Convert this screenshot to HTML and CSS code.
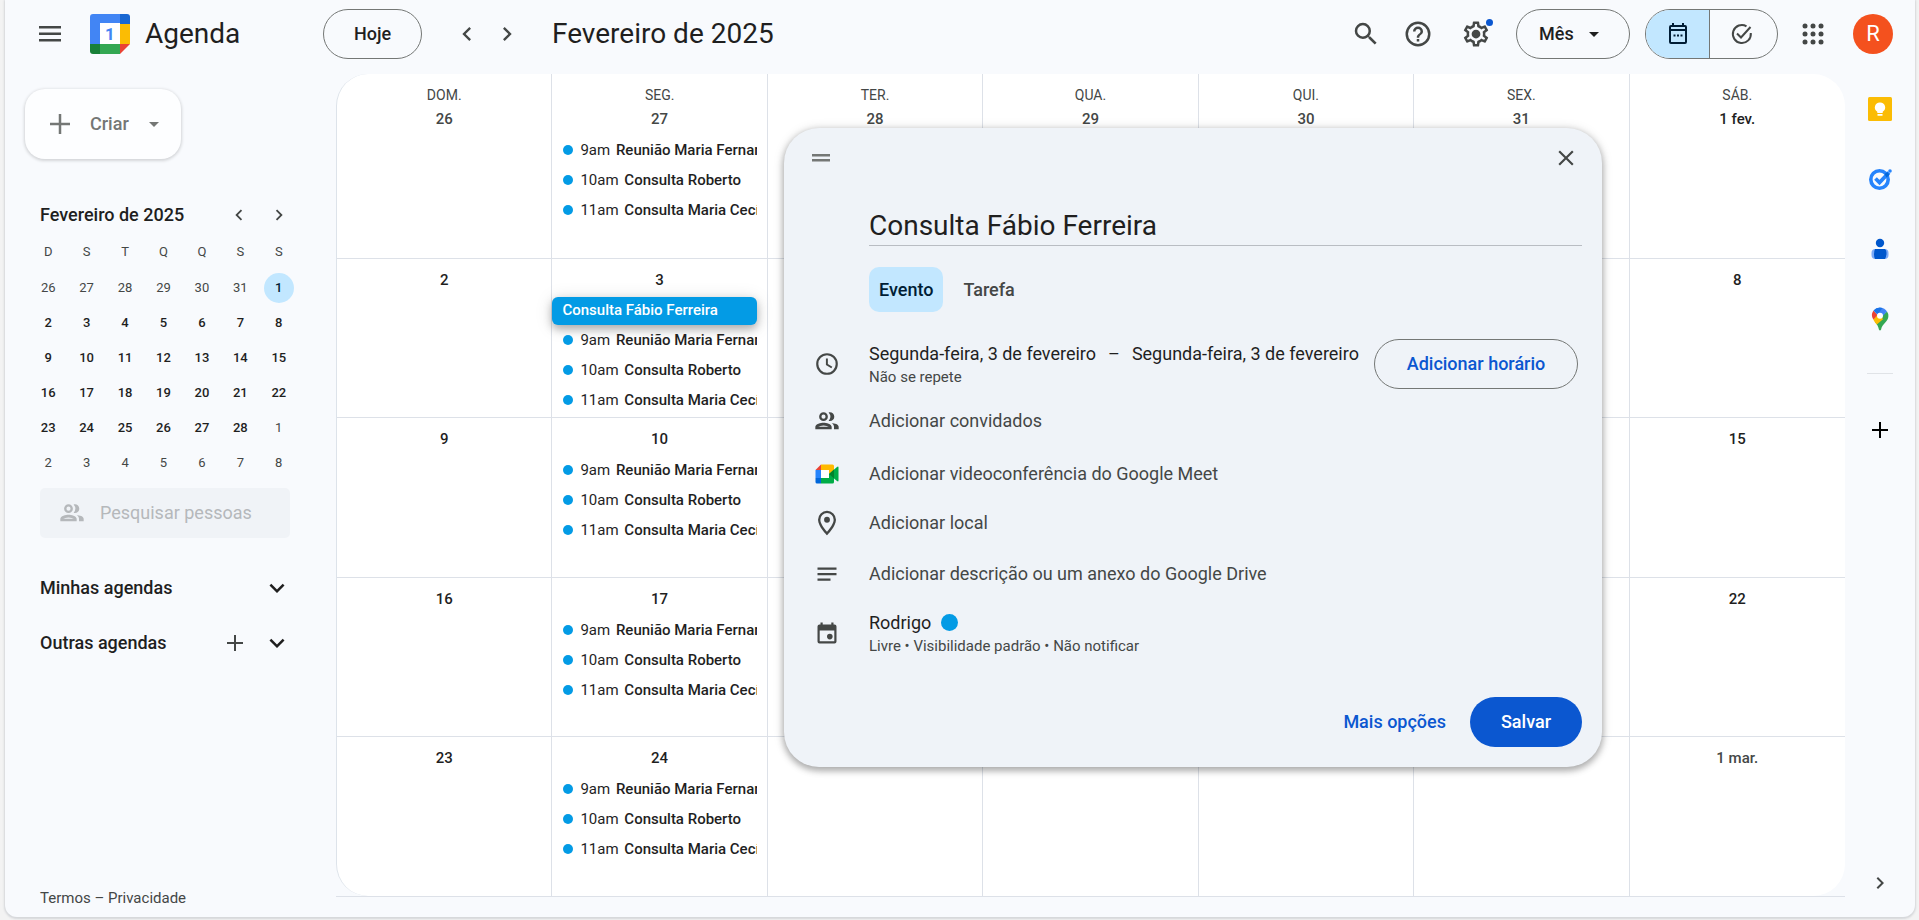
FILE: index.html
```html
<!DOCTYPE html>
<html lang="pt-BR">
<head>
<meta charset="utf-8">
<meta name="viewport" content="width=device-width, initial-scale=1">
<title>Agenda - Fevereiro de 2025</title>
<link rel="stylesheet" href="styles.css">
</head>
<body>
<svg class="defs" aria-hidden="true">
  <symbol id="i-left" viewBox="0 0 24 24"><path d="M15.41 7.41 14 6l-6 6 6 6 1.41-1.41L10.83 12z"/></symbol>
  <symbol id="i-right" viewBox="0 0 24 24"><path d="M10 6 8.59 7.41 13.17 12l-4.58 4.59L10 18l6-6z"/></symbol>
  <symbol id="i-down" viewBox="0 0 24 24"><path d="M7.41 8.59 12 13.17l4.59-4.58L18 10l-6 6-6-6z"/></symbol>
  <symbol id="i-caret" viewBox="0 0 24 24"><path d="m7 10 5 5 5-5z"/></symbol>
  <symbol id="i-plus" viewBox="0 0 24 24"><path d="M20 13h-7v7h-2v-7H4v-2h7V4h2v7h7z"/></symbol>
  <symbol id="i-people" viewBox="0 0 24 24"><path d="M9 13.5c-2.34 0-7 1.17-7 3.5v2h14v-2c0-2.33-4.66-3.500-7-3.500zM4.340 17c.84-.58 2.870-1.250 4.660-1.250s3.820.67 4.660 1.250zM9 12a3.750 3.750 0 1 0 0-7.500A3.750 3.750 0 0 0 9 12zm0-5.500a1.750 1.750 0 1 1 0 3.500 1.750 1.750 0 0 1 0-3.500zm7.040 7.310c1.160.84 1.960 1.960 1.960 3.190V19h4v-2c0-2.020-3.500-2.920-5.960-3.190zM14.500 12a3.750 3.750 0 0 0 0-7.500c-.44 0-.8.080-1.100.2a5.500 5.500 0 0 1 0 7.100c.3.120.66.200 1.100.200z"/></symbol>
</svg>

<div class="app">
  <header class="topbar">
    <div class="brand">
      <button class="icon-btn" aria-label="Menu principal">
        <svg class="ic-28" viewBox="0 0 28 28"><path d="M3 6h22v2.500H3zM3 12.500h22V15H3zM3 19h22v2.500H3z"/></svg>
      </button>
      <svg class="logo" viewBox="0 0 40 40" aria-hidden="true">
        <path fill="#4285f4" d="M3 0h27v9H10v21H0V3a3 3 0 0 1 3-3z"/>
        <path fill="#fff" d="M10 9h20v21H10z"/>
        <path fill="#1967d2" d="M30 0h7a3 3 0 0 1 3 3v7H30z"/>
        <path fill="#fbbc04" d="M30 10h10v20H30z"/>
        <path fill="#188038" d="M0 30h10v10H3a3 3 0 0 1-3-3z"/>
        <path fill="#34a853" d="M10 30h20v10H10z"/>
        <path fill="#ea4335" d="M30 30h10L30 40z"/>
        <text class="logo-day" x="20" y="26" text-anchor="middle">1</text>
      </svg>
      <span class="brand-name">Agenda</span>
    </div>
    <div class="period">
      <button class="pill today">Hoje</button>
      <div class="pager">
        <button class="icon-btn" aria-label="Mês anterior"><svg class="ic-28"><use href="#i-left"/></svg></button>
        <button class="icon-btn" aria-label="Próximo mês"><svg class="ic-28"><use href="#i-right"/></svg></button>
      </div>
      <h1 class="period-title">Fevereiro de 2025</h1>
    </div>
    <div class="tools">
      <button class="icon-btn tool" aria-label="Pesquisar"><svg class="ic-30" viewBox="0 0 24 24"><path d="M15.500 14h-.79l-.28-.27A6.470 6.470 0 0 0 16 9.500 6.500 6.500 0 1 0 9.500 16c1.610 0 3.090-.59 4.230-1.570l.27.28v.79l5 4.990L20.490 19zm-6 0a4.500 4.500 0 1 1 0-9 4.500 4.500 0 0 1 0 9z"/></svg></button>
      <button class="icon-btn tool" aria-label="Ajuda"><svg class="ic-30" viewBox="0 0 24 24"><path d="M11 18h2v-2h-2zm1-16a10 10 0 1 0 0 20 10 10 0 0 0 0-20zm0 18a8 8 0 1 1 0-16 8 8 0 0 1 0 16zm0-14a4 4 0 0 0-4 4h2a2 2 0 1 1 4 0c0 2-3 1.750-3 5h2c0-2.250 3-2.500 3-5a4 4 0 0 0-4-4z"/></svg></button>
      <button class="icon-btn tool settings" aria-label="Configurações"><svg class="ic-30" viewBox="0 0 24 24"><path d="M19.43 12.98c.04-.32.07-.64.07-.98 0-.34-.03-.66-.07-.98l2.110-1.650c.19-.15.24-.42.12-.64l-2-3.460c-.09-.16-.26-.25-.44-.25-.06 0-.12.01-.17.03l-2.490 1c-.52-.4-1.080-.73-1.690-.98l-.38-2.650C14.460 2.180 14.250 2 14 2h-4c-.25 0-.46.18-.49.42l-.38 2.650c-.61.25-1.170.59-1.690.98l-2.490-1c-.06-.02-.12-.03-.18-.03-.17 0-.34.09-.43.25l-2 3.460c-.13.22-.07.49.12.64l2.110 1.650c-.04.32-.07.65-.07.98 0 .33.03.66.07.98l-2.110 1.650c-.19.15-.24.42-.12.64l2 3.460c.09.16.26.25.44.25.06 0 .12-.01.17-.03l2.490-1c.52.4 1.080.73 1.690.98l.38 2.650c.03.24.24.42.49.42h4c.25 0 .46-.18.49-.42l.38-2.650c.61-.25 1.170-.59 1.690-.98l2.490 1c.06.02.12.03.18.03.17 0 .34-.09.43-.25l2-3.460c.12-.22.07-.49-.12-.64zm-1.980-1.710c.04.31.05.52.05.73 0 .21-.02.43-.05.73l-.14 1.130.89.7 1.080.84-.7 1.210-1.270-.51-1.040-.42-.9.68c-.43.32-.84.56-1.250.73l-1.060.43-.16 1.130-.2 1.350h-1.400l-.19-1.350-.16-1.130-1.060-.43c-.43-.18-.83-.41-1.230-.71l-.91-.7-1.060.43-1.270.51-.7-1.210 1.080-.84.89-.7-.14-1.130c-.03-.31-.05-.54-.05-.74s.02-.43.05-.73l.14-1.130-.89-.7-1.080-.84.7-1.210 1.270.51 1.040.42.9-.68c.43-.32.84-.56 1.250-.73l1.060-.43.16-1.130.2-1.350h1.390l.19 1.350.16 1.130 1.060.43c.43.18.83.41 1.230.71l.91.7 1.060-.43 1.270-.51.7 1.210-1.070.85-.89.7z"/><circle cx="12" cy="12" r="3.500"/></svg><span class="notice"></span></button>
      <button class="pill view">Mês <svg class="ic-24"><use href="#i-caret"/></svg></button>
      <div class="switch">
        <button class="switch-btn on" aria-label="Agenda" aria-pressed="true"><svg class="ic-24" viewBox="0 0 24 24"><path fill-rule="evenodd" d="M19 3h-1V1h-2v2H8V1H6v2H5a2 2 0 0 0-2 2v15a2 2 0 0 0 2 2h14a2 2 0 0 0 2-2V5a2 2 0 0 0-2-2zm0 17H5V9h14zM5 7V5h14v2zm2.500 5.500h2v2h-2zm3.500 0h2v2h-2zm3.500 0h2v2h-2z"/></svg></button>
        <button class="switch-btn" aria-label="Tarefas" aria-pressed="false"><svg class="ic-24" viewBox="0 0 24 24"><path class="line" d="M16.500 4.300A9 9 0 1 0 20.800 11M7 11.500l4 4L20.500 5"/></svg></button>
      </div>
      <button class="icon-btn apps" aria-label="Google Apps"><svg class="ic-28" viewBox="0 0 28 28"><circle cx="6" cy="6" r="2.500"/><circle cx="14" cy="6" r="2.500"/><circle cx="22" cy="6" r="2.500"/><circle cx="6" cy="14" r="2.500"/><circle cx="14" cy="14" r="2.500"/><circle cx="22" cy="14" r="2.500"/><circle cx="6" cy="22" r="2.500"/><circle cx="14" cy="22" r="2.500"/><circle cx="22" cy="22" r="2.500"/></svg></button>
      <button class="avatar" aria-label="Conta">R</button>
    </div>
  </header>

  <div class="body">
    <aside class="sidebar">
      <button class="create"><svg class="ic-30"><use href="#i-plus"/></svg><span>Criar</span><svg class="ic-24"><use href="#i-caret"/></svg></button>

      <div class="mini-head">
        <h2 class="side-title">Fevereiro de 2025</h2>
        <div class="mini-pager">
          <button class="icon-btn" aria-label="Mês anterior"><svg class="ic-22"><use href="#i-left"/></svg></button>
          <button class="icon-btn" aria-label="Próximo mês"><svg class="ic-22"><use href="#i-right"/></svg></button>
        </div>
      </div>
      <table class="mini">
        <thead><tr><th>D</th><th>S</th><th>T</th><th>Q</th><th>Q</th><th>S</th><th>S</th></tr></thead>
        <tbody>
          <tr><td class="out">26</td><td class="out">27</td><td class="out">28</td><td class="out">29</td><td class="out">30</td><td class="out">31</td><td><span class="selected">1</span></td></tr>
          <tr><td>2</td><td>3</td><td>4</td><td>5</td><td>6</td><td>7</td><td>8</td></tr>
          <tr><td>9</td><td>10</td><td>11</td><td>12</td><td>13</td><td>14</td><td>15</td></tr>
          <tr><td>16</td><td>17</td><td>18</td><td>19</td><td>20</td><td>21</td><td>22</td></tr>
          <tr><td>23</td><td>24</td><td>25</td><td>26</td><td>27</td><td>28</td><td class="out">1</td></tr>
          <tr><td class="out">2</td><td class="out">3</td><td class="out">4</td><td class="out">5</td><td class="out">6</td><td class="out">7</td><td class="out">8</td></tr>
        </tbody>
      </table>

      <label class="people"><svg class="ic-28" aria-hidden="true"><use href="#i-people"/></svg><input type="text" placeholder="Pesquisar pessoas" aria-label="Pesquisar pessoas"></label>

      <div class="group">
        <h2 class="side-title">Minhas agendas</h2>
        <button class="icon-btn" aria-label="Expandir minhas agendas"><svg class="ic-30 dark"><use href="#i-down"/></svg></button>
      </div>
      <div class="group">
        <h2 class="side-title">Outras agendas</h2>
        <button class="icon-btn add" aria-label="Adicionar outras agendas"><svg class="ic-24"><use href="#i-plus"/></svg></button>
        <button class="icon-btn" aria-label="Expandir outras agendas"><svg class="ic-30 dark"><use href="#i-down"/></svg></button>
      </div>

      <footer class="legal"><a href="#termos">Termos</a> – <a href="#privacidade">Privacidade</a></footer>
    </aside>

    <main class="stage">
      <div class="month-frame">
      <div class="month">
        <div class="cell"><span class="dow">DOM.</span><span class="date out">26</span></div>
        <div class="cell"><span class="dow">SEG.</span><span class="date out">27</span>
          <ul class="events"><li class="event"><span class="time">9am</span> Reunião Maria Fernanda</li><li class="event"><span class="time">10am</span> Consulta Roberto</li><li class="event"><span class="time">11am</span> Consulta Maria Cecília</li></ul></div>
        <div class="cell"><span class="dow">TER.</span><span class="date out">28</span></div>
        <div class="cell"><span class="dow">QUA.</span><span class="date out">29</span></div>
        <div class="cell"><span class="dow">QUI.</span><span class="date out">30</span></div>
        <div class="cell"><span class="dow">SEX.</span><span class="date out">31</span></div>
        <div class="cell"><span class="dow">SÁB.</span><span class="date">1 fev.</span></div>

        <div class="cell"><span class="date">2</span></div>
        <div class="cell"><span class="date">3</span>
          <button class="draft">Consulta Fábio Ferreira</button>
          <ul class="events"><li class="event"><span class="time">9am</span> Reunião Maria Fernanda</li><li class="event"><span class="time">10am</span> Consulta Roberto</li><li class="event"><span class="time">11am</span> Consulta Maria Cecília</li></ul></div>
        <div class="cell"></div><div class="cell"></div><div class="cell"></div><div class="cell"></div>
        <div class="cell"><span class="date">8</span></div>

        <div class="cell"><span class="date">9</span></div>
        <div class="cell"><span class="date">10</span>
          <ul class="events"><li class="event"><span class="time">9am</span> Reunião Maria Fernanda</li><li class="event"><span class="time">10am</span> Consulta Roberto</li><li class="event"><span class="time">11am</span> Consulta Maria Cecília</li></ul></div>
        <div class="cell"></div><div class="cell"></div><div class="cell"></div><div class="cell"></div>
        <div class="cell"><span class="date">15</span></div>

        <div class="cell"><span class="date">16</span></div>
        <div class="cell"><span class="date">17</span>
          <ul class="events"><li class="event"><span class="time">9am</span> Reunião Maria Fernanda</li><li class="event"><span class="time">10am</span> Consulta Roberto</li><li class="event"><span class="time">11am</span> Consulta Maria Cecília</li></ul></div>
        <div class="cell"></div><div class="cell"></div><div class="cell"></div><div class="cell"></div>
        <div class="cell"><span class="date">22</span></div>

        <div class="cell"><span class="date">23</span></div>
        <div class="cell"><span class="date">24</span>
          <ul class="events"><li class="event"><span class="time">9am</span> Reunião Maria Fernanda</li><li class="event"><span class="time">10am</span> Consulta Roberto</li><li class="event"><span class="time">11am</span> Consulta Maria Cecília</li></ul></div>
        <div class="cell"></div><div class="cell"></div><div class="cell"></div><div class="cell"></div>
        <div class="cell"><span class="date out">1 mar.</span></div>
      </div>
      </div>

      <section class="dialog" role="dialog" aria-label="Novo evento">
        <div class="dialog-bar">
          <svg class="handle" viewBox="0 0 18 8" aria-hidden="true"><path d="M0 0h18v2.500H0zM0 5h18v2.500H0z"/></svg>
          <button class="icon-btn" aria-label="Fechar"><svg class="ic-26" viewBox="0 0 24 24"><path d="M19 6.410 17.590 5 12 10.590 6.410 5 5 6.410 10.590 12 5 17.590 6.410 19 12 13.410 17.590 19 19 17.590 13.410 12z"/></svg></button>
        </div>
        <div class="dialog-title">
          <input class="name" type="text" value="Consulta Fábio Ferreira" aria-label="Título">
        </div>
        <div class="tabs">
          <button class="tab on">Evento</button>
          <button class="tab">Tarefa</button>
        </div>
        <div class="row when">
          <svg class="ic-26" viewBox="0 0 24 24" aria-hidden="true"><path d="M12 2a10 10 0 1 0 0 20 10 10 0 0 0 0-20zm0 18a8 8 0 1 1 0-16 8 8 0 0 1 0 16zm.800-13H11v6l5 3 .9-1.400-4.100-2.500z"/></svg>
          <div class="lines">
            <div class="strong range"><span>Segunda-feira, 3 de fevereiro</span><span>–</span><span>Segunda-feira, 3 de fevereiro</span></div>
            <div class="small">Não se repete</div>
          </div>
          <button class="pill add-time">Adicionar horário</button>
        </div>
        <div class="row guests"><svg class="ic-28" aria-hidden="true"><use href="#i-people"/></svg><span>Adicionar convidados</span></div>
        <div class="row meet"><svg class="ic-24" viewBox="0 0 24 24" aria-hidden="true"><path fill="#ea4335" d="M6 2.500v5.500H.500z"/><path fill="#ffba00" d="M6 2.500h11.500q1.500 0 1.500 1.500v4.500L14 12V8H6z"/><path fill="#2684fc" d="M.500 8H6v8H.500z"/><path fill="#0066da" d="M.500 16H6v5.500H2q-1.500 0-1.500-1.500z"/><path fill="#00ac47" d="M6 16h8v-4l8-7q1.500-1 1.500.500v13q0 1.500-1.500.500l-3-2.500V20q0 1.500-1.500 1.500H6z"/><path fill="#00832d" d="m14 12 5-4.500v9z"/><path fill="#fff" d="M6 8h8v8H6z"/></svg><span>Adicionar videoconferência do Google Meet</span></div>
        <div class="row place"><svg class="ic-28" viewBox="0 0 24 24" aria-hidden="true"><path d="M12 1.500a7.700 7.700 0 0 0-7.700 7.700C4.300 15 12 22.500 12 22.500s7.700-7.500 7.700-13.300A7.700 7.700 0 0 0 12 1.500zm0 18c-2.500-2.900-5.700-7.100-5.700-10.300a5.700 5.700 0 0 1 11.400 0c0 3.200-3.200 7.400-5.700 10.300z"/><circle cx="12" cy="9.200" r="2.500"/></svg><span>Adicionar local</span></div>
        <div class="row notes"><svg class="ic-24" viewBox="0 0 24 24" aria-hidden="true"><path d="M2.500 5.500h19v2.200h-19zM2.500 11h19v2.200h-19zM2.500 16.500h13v2.200h-13z"/></svg><span>Adicionar descrição ou um anexo do Google Drive</span></div>
        <div class="row owner">
          <svg class="ic-24" viewBox="0 0 24 24" aria-hidden="true"><path fill-rule="evenodd" d="M5.500 1.500h2.200v2h8.600v-2h2.200v2h1a2 2 0 0 1 2 2v15a2 2 0 0 1-2 2h-15a2 2 0 0 1-2-2v-15a2 2 0 0 1 2-2h1zM4.700 9.500v10.800h14.600V9.500z"/><circle cx="14.800" cy="15.600" r="2.800"/></svg>
          <div class="lines">
            <div class="strong who">Rodrigo <span class="swatch"></span></div>
            <div class="small">Livre • Visibilidade padrão • Não notificar</div>
          </div>
        </div>
        <div class="actions">
          <button class="link-btn">Mais opções</button>
          <button class="save">Salvar</button>
        </div>
      </section>
    </main>

    <nav class="rail" aria-label="Painel lateral">
      <button class="icon-btn" aria-label="Keep"><svg class="ic-24" viewBox="0 0 24 24"><rect width="24" height="24" rx="1.500" fill="#fbbc04"/><path fill="#fff" d="M12 5.500a5 5 0 0 0-2.700 9.300V16h5.400v-1.200A5 5 0 0 0 12 5.500zM9.500 17h5v1.700h-5z"/></svg></button>
      <button class="icon-btn" aria-label="Tarefas"><svg class="ic-24" viewBox="0 0 24 24"><circle cx="11.500" cy="12.500" r="8.700" fill="none" stroke="#2684fc" stroke-width="3.600"/><path d="m7.500 11.500 4 4 9.500-10" fill="none" stroke="#2684fc" stroke-width="3.800"/><path fill="#0066da" d="m16.500 7 3-2 2 3-3 2.500z"/><circle cx="22" cy="4" r="1.800" fill="#2684fc"/></svg></button>
      <button class="icon-btn" aria-label="Contatos"><svg class="ic-24" viewBox="0 0 24 24"><rect x="3.500" y="12" width="17" height="10" rx="4" fill="#7baaf7"/><path fill="#0057cc" d="M7 12h10q1.500 1 1.500 4t-1.500 6H7q-1-2-1-5t1-5z"/><circle cx="12" cy="6" r="4.200" fill="#0057cc"/></svg></button>
      <button class="icon-btn" aria-label="Maps"><svg class="ic-24" viewBox="0 0 24 24"><path fill="#34a853" d="M20.400 9c0 6-6.400 7.500-7.300 13.500q-1.100 2-2.200 0C10.400 19.500 9 17.500 7 15l12-10.500q1.400 2 1.400 4.500z"/><path fill="#fbbc04" d="m5.300 12.500 4-5 6 4.500-6.500 5.500q-2.500-2.500-3.500-5z"/><path fill="#ea4335" d="M5.600 3.500 9.500 8l-4 4.500C3 9 3.700 6 5.600 3.500z"/><path fill="#4285f4" d="M5.600 3.500A8.400 8.400 0 0 1 19 4.500L14 10 9.500 7.500z"/><path fill="#1a73e8" d="M5.600 3.500A8.400 8.400 0 0 1 14.500.900L9.500 7.500z"/><circle cx="12" cy="8.700" r="3" fill="#fff"/></svg></button>
      <hr class="rail-line">
      <button class="icon-btn" aria-label="Instalar complementos"><svg class="ic-24 black"><use href="#i-plus"/></svg></button>
      <button class="icon-btn collapse" aria-label="Ocultar painel lateral"><svg class="ic-24"><use href="#i-right"/></svg></button>
    </nav>
  </div>
</div>
</body>
</html>
```
FILE: styles.css
```css
* { box-sizing: border-box; }

body {
  margin: 0;
  min-height: 100vh;
  display: flex;
  background: #f3f3f3;
  color: #1f1f1f;
  font: 400 18px/24px Roboto, "Liberation Sans", sans-serif;
}

h1, h2, ul { margin: 0; padding: 0; font-weight: inherit; }
ul { list-style: none; }
button, input { font: inherit; color: inherit; }
button { border: 0; padding: 0; background: none; cursor: pointer; }
svg { display: block; flex: none; fill: #444746; }
a { color: inherit; text-decoration: none; }

.defs { position: absolute; width: 0; height: 0; }
.ic-22 { width: 22px; height: 22px; }
.ic-24 { width: 24px; height: 24px; }
.ic-26 { width: 26px; height: 26px; }
.ic-28 { width: 28px; height: 28px; }
.ic-30 { width: 30px; height: 30px; }
.dark { fill: #1f1f1f; }
.black { fill: #000; }
.line { fill: none; stroke: #444746; stroke-width: 2; }

.icon-btn {
  display: flex;
  align-items: center;
  justify-content: center;
  width: 40px;
  height: 40px;
  border-radius: 50%;
}

.pill {
  height: 50px;
  border: 1px solid #747775;
  border-radius: 25px;
  font-weight: 500;
}

.app {
  flex: 1;
  display: flex;
  flex-direction: column;
  min-width: 0;
  margin: 0 4px 3px 5px;
  background: #f8fafd;
  border-radius: 0 0 12px 12px;
  box-shadow: 0 1px 2px 1px #d5d7da;
}

/* Top bar */
.topbar { display: flex; align-items: center; height: 74px; padding: 0 22px 6px 0; }
.brand { display: flex; align-items: center; width: 318px; padding-left: 25px; }
.logo { width: 40px; height: 40px; margin: 0 15px 0 20px; }
.logo-day { font: 700 17px Roboto, sans-serif; fill: #4285f4; }
.brand-name { font-size: 28px; line-height: 36px; }
.period { display: flex; align-items: center; }
.today { width: 99px; }
.pager { display: flex; margin: 0 25px 0 25px; }
.period-title { font-size: 28px; line-height: 36px; }
.tools { display: flex; align-items: center; margin-left: auto; }
.tool { margin-right: 12px; }
.settings { position: relative; margin: 0 20px 0 6px; }
.notice {
  position: absolute;
  top: 5px;
  right: 3px;
  width: 7px;
  height: 7px;
  border-radius: 50%;
  background: #0b57d0;
}
.view { display: flex; align-items: center; gap: 8px; width: 114px; padding-left: 22px; }
.view svg { fill: #1f1f1f; }
.switch {
  display: flex;
  width: 133px;
  height: 50px;
  margin-left: 15px;
  border: 1px solid #747775;
  border-radius: 25px;
  overflow: hidden;
}
.switch-btn { flex: 1; display: flex; align-items: center; justify-content: center; }
.switch-btn:last-child { padding-right: 4px; }
.switch-btn.on { background: #c2e7ff; border-right: 1px solid #747775; }
.switch-btn.on svg { fill: #001d35; }
.apps { margin: 0 20px 0 15px; }
.avatar {
  width: 40px;
  height: 40px;
  border-radius: 50%;
  background: #f4511e;
  color: #fff;
  font-size: 22px;
}

/* Body */
.body { flex: 1; display: flex; min-height: 0; }

/* Sidebar */
.sidebar {
  display: flex;
  flex-direction: column;
  flex: none;
  width: 331px;
  padding: 15px 46px 7px 35px;
}
.create {
  display: flex;
  align-items: center;
  align-self: flex-start;
  height: 70px;
  margin-left: -15px;
  padding: 0 15px 0 20px;
  border-radius: 20px;
  background: #fdfeff;
  box-shadow: 0 1px 3px 1px #d4d6d9;
  color: #747775;
  font-weight: 500;
}
.create span { margin: 0 13px 0 15px; }
.create svg { fill: #747775; }
.mini-head { display: flex; justify-content: space-between; align-items: center; margin-top: 36px; }
.side-title { font-size: 18px; line-height: 24px; font-weight: 500; }
.mini-pager { display: flex; margin-right: -9px; }
.mini {
  width: 269px;
  margin: -1px 0 0 -11px;
  border-collapse: collapse;
  table-layout: fixed;
  font-size: 13px;
  line-height: 16px;
  text-align: center;
}
.mini th { height: 36px; padding: 0; font-weight: 400; color: #444746; }
.mini td { height: 35px; padding: 0; font-weight: 500; }
.mini .out { font-weight: 400; color: #444746; }
.selected {
  display: block;
  width: 30px;
  margin: 0 auto;
  border-radius: 50%;
  background: #c2e7ff;
  color: #001d35;
  line-height: 30px;
}
.people {
  display: flex;
  align-items: center;
  gap: 14px;
  height: 50px;
  margin-top: 8px;
  padding-left: 18px;
  border-radius: 5px;
  background: #f0f3f7;
}
.people svg { fill: #b5b8bb; }
.people input { flex: 1; min-width: 0; padding: 0; border: 0; background: none; outline: 0; }
.people input::placeholder { color: #b5b8bb; opacity: 1; }
.group { display: flex; align-items: center; height: 40px; margin-top: 15px; }
.people + .group { margin-top: 30px; }
.group .side-title { flex: 1; }
.group .icon-btn { margin-right: -7px; }
.group .add { margin-right: 2px; }
.legal { margin-top: auto; color: #444746; font-size: 15px; line-height: 24px; }

/* Month view */
.stage { position: relative; flex: 1; display: flex; min-width: 0; padding-bottom: 20px; }
.month-frame { flex: 1; display: flex; min-width: 0; border-bottom: 1px solid #dde1e8; }
.month {
  flex: 1;
  display: grid;
  grid-template-columns: repeat(7, minmax(0, 1fr));
  grid-template-rows: 185fr repeat(4, 159fr);
  background: #fff;
  border-left: 1px solid #dde3ea;
  border-radius: 32px;
  overflow: hidden;
}
.cell {
  display: flex;
  flex-direction: column;
  padding-top: 9px;
  border-right: 1px solid #dde1e8;
  border-bottom: 1px solid #dde1e8;
}
.cell:nth-child(7n) { border-right: 0; }
.cell:nth-last-child(-n + 7) { border-bottom: 0; }
.dow {
  color: #444746;
  font-size: 14px;
  line-height: 24px;
  text-align: center;
}
.date { font-size: 15px; line-height: 24px; font-weight: 500; text-align: center; }
.date.out { color: #444746; }
.events { margin: 4px 10px 0 11px; }
.event {
  position: relative;
  height: 30px;
  padding-left: 17px;
  overflow: hidden;
  white-space: nowrap;
  font-size: 15px;
  line-height: 30px;
  font-weight: 500;
}
.event::before {
  content: "";
  position: absolute;
  top: 10px;
  left: 0;
  width: 10px;
  height: 10px;
  border-radius: 50%;
  background: #039be5;
}
.time { margin-right: 2px; font-weight: 400; }
.draft {
  height: 28px;
  margin: 5px 10px 0 0;
  padding: 0 10px 2px;
  border-radius: 6px;
  background: #039be5;
  box-shadow: 0 4px 8px #0004, 0 2px 18px #0002;
  color: #fff;
  font-size: 15px;
  line-height: 26px;
  font-weight: 500;
  text-align: left;
  white-space: nowrap;
  overflow: hidden;
}
.draft + .events { margin-top: 0; }

/* Event dialog */
.dialog {
  position: absolute;
  top: 54px;
  left: 448px;
  width: 818px;
  padding: 0 20px 20px;
  border-radius: 35px;
  background: #eff3f8;
  box-shadow: 0 3px 6px 1px #0004, 0 1px 12px #0002;
  color: #444746;
}
.dialog-bar {
  display: flex;
  justify-content: space-between;
  align-items: center;
  padding: 10px 0 0 8px;
}
.dialog-bar .icon-btn { margin-right: -4px; }
.handle { width: 18px; height: 8px; fill: #747775; }
.dialog-title { margin: 23px 0 0 65px; }
.name {
  display: block;
  width: 100%;
  height: 45px;
  padding: 4px 0 0;
  border: 0;
  border-bottom: 1px solid #b9bdc3;
  background: none;
  outline: 0;
  color: #1f1f1f;
  font-size: 28px;
  line-height: 36px;
}
.tabs { display: flex; gap: 10px; margin: 21px 0 0 65px; }
.tab { height: 45px; padding: 0 10px; border-radius: 10px; font-weight: 500; }
.tab.on { background: #c2e7ff; color: #001d35; }
.row {
  display: grid;
  grid-template-columns: 46px minmax(0, 1fr) auto;
  column-gap: 19px;
  align-items: center;
  min-height: 50px;
}
.row > svg { justify-self: center; }
.when { margin-top: 27px; padding-right: 4px; }
.lines { display: grid; row-gap: 1px; }
.strong { color: #1f1f1f; }
.range { display: flex; gap: 12px; white-space: nowrap; }
.small { font-size: 15px; line-height: 20px; }
.add-time { width: 204px; color: #0b57d0; }
.guests { margin-top: 7px; }
.meet { margin-top: 3px; }
.place { margin-top: -1px; }
.notes { margin-top: 1px; }
.owner { margin-top: 9px; }
.who { display: flex; align-items: center; gap: 10px; }
.swatch { width: 17px; height: 17px; border-radius: 50%; background: #039be5; }
.actions { display: flex; justify-content: flex-end; gap: 24px; margin-top: 39px; }
.link-btn { color: #0b57d0; font-weight: 500; }
.save {
  width: 112px;
  height: 50px;
  border-radius: 25px;
  background: #0b57d0;
  color: #fff;
  font-weight: 500;
}

/* Right rail */
.rail {
  display: flex;
  flex-direction: column;
  align-items: center;
  flex: none;
  width: 70px;
  padding: 15px 0 14px;
  gap: 30px;
}
.rail-line { width: 26px; margin: 4px 0 6px; border: 0; border-top: 1px solid #e0e3e7; }
.collapse { margin-top: auto; }
```
